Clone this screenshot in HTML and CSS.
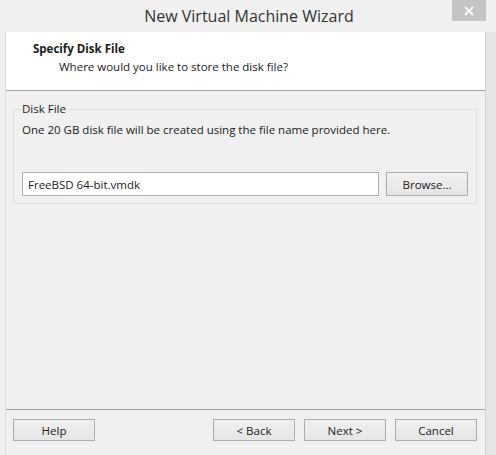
FILE: index.html
```html
<!DOCTYPE html>
<html>
<head>
<meta charset="utf-8">
<link rel="stylesheet" href="styles.css">
</head>
<body>
<div class="window">
  <div class="titlebar">
    <span></span>
    <div class="title">New Virtual Machine Wizard</div>
    <button class="close" aria-label="Close">
      <svg width="10" height="10" viewBox="0 0 10 10"><path d="M1 1 L9 9 M9 1 L1 9" stroke="#fff" stroke-width="1.8"/></svg>
    </button>
  </div>
  <div class="frame">
    <div class="client">
      <div class="header">
        <div class="h-title">Specify Disk File</div>
        <div class="h-sub">Where would you like to store the disk file?</div>
      </div>
      <div class="body">
        <fieldset class="group">
          <legend>Disk File</legend>
          <p class="desc">One 20 GB disk file will be created using the file name provided here.</p>
          <div class="filerow">
            <input class="field" type="text" value="FreeBSD 64-bit.vmdk">
            <button class="btn browse">Browse...</button>
          </div>
        </fieldset>
      </div>
      <div class="footer">
        <button class="btn">Help</button>
        <div class="nav">
          <button class="btn">&lt; Back</button>
          <button class="btn">Next &gt;</button>
          <button class="btn">Cancel</button>
        </div>
      </div>
    </div>
    <div class="edge"></div>
  </div>
</div>
</body>
</html>
```

FILE: styles.css
```css
* { box-sizing: border-box; }
html, body { margin: 0; padding: 0; }
body {
  width: 496px;
  height: 455px;
  overflow: hidden;
  font-family: "Open Sans", "Noto Sans", sans-serif;
  font-size: 11.5px;
  color: #1a1a1a;
  background: #f0f0f0;
}
.window {
  width: 496px;
  height: 455px;
  display: flex;
  flex-direction: column;
  background: #f0f0f0;
}
.titlebar {
  height: 32px;
  display: grid;
  grid-template-columns: 1fr auto 1fr;
  align-items: start;
}
.title {
  font-size: 16px;
  color: #333;
  padding-top: 5px;
  padding-left: 2px;
}
.close {
  justify-self: end;
  width: 34px;
  height: 21px;
  margin-right: 10px;
  border: 0;
  padding: 0;
  background: #c4c4c4;
  display: flex;
  align-items: center;
  justify-content: center;
}
.frame {
  flex: 1;
  display: flex;
  padding-left: 5px;
}
.client {
  width: 480px;
  display: flex;
  flex-direction: column;
  border-left: 1px solid #dcdcdc;
}
.edge {
  flex: 1;
  border-left: 1px solid #d4d4d4;
  background: #e6e6e6;
}
.header {
  height: 59px;
  background: #fff;
  border-bottom: 1px solid #a0a0a0;
  padding: 9px 0 0 27px;
}
.h-title {
  font-weight: bold;
  font-size: 11.5px;
  line-height: 16px;
}
.h-sub {
  padding-left: 26px;
  line-height: 17px;
  margin-top: 1px;
}
.body {
  flex: 1;
  padding: 10px 7px 0 7px;
}
.group {
  margin: 0;
  width: 464px;
  height: 103px;
  border: 1px solid #dadfe2;
  border-radius: 2px;
  padding: 5px 8px 0 8px;
}
.group legend {
  padding: 0 1px;
  margin-left: -1px;
  line-height: 16px;
}
.desc {
  margin: 0;
  line-height: 16px;
}
.filerow {
  display: flex;
  gap: 7px;
  margin-top: 34px;
}
.field {
  width: 357px;
  height: 24px;
  border: 1px solid #acacac;
  background: #fff;
  font: inherit;
  color: #1a1a1a;
  padding: 0 5px;
  outline: none;
}
.btn {
  width: 82px;
  height: 22px;
  font: inherit;
  color: #1a1a1a;
  border: 1px solid #acacac;
  background: linear-gradient(#f0f0f0, #e5e5e5);
  padding: 0;
}
.browse {
  height: 24px;
}
.footer {
  height: 46px;
  border-top: 1px solid #a0a0a0;
  display: flex;
  justify-content: space-between;
  padding: 9px 8px 0 7px;
}
.nav {
  display: flex;
  gap: 9px;
}
```
